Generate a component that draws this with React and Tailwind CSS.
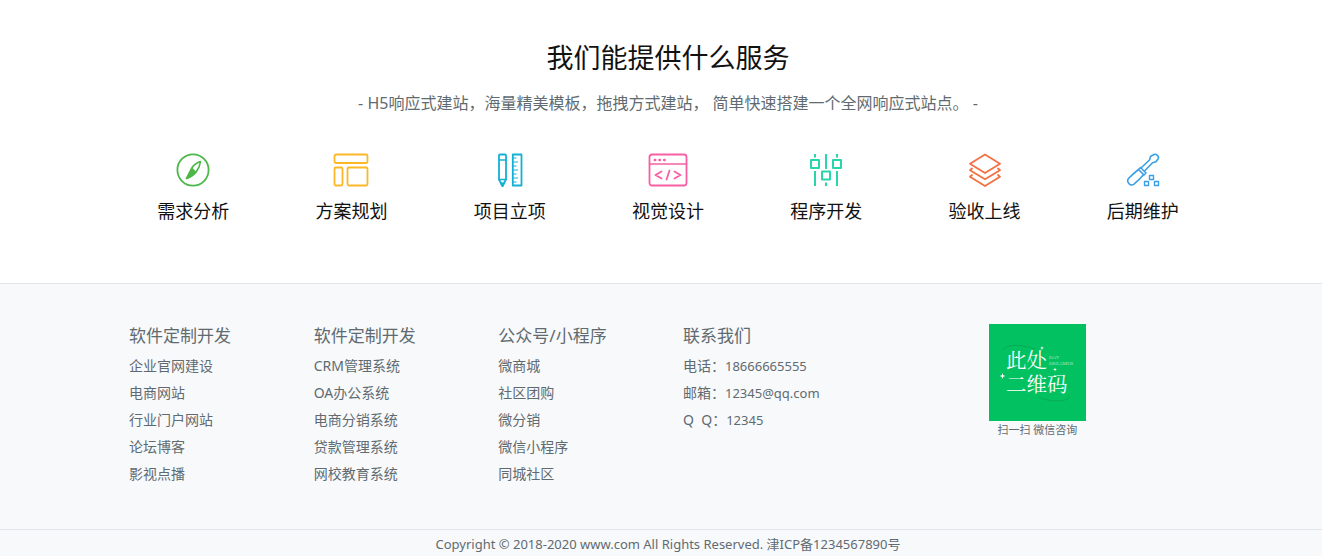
import React from "react";

const ICON_PROPS = {
  width: 40,
  height: 36,
  viewBox: "0 0 40 36",
  fill: "none",
  strokeWidth: 1.8,
  strokeLinejoin: "round",
  strokeLinecap: "round",
  "aria-hidden": true,
};

const CompassIcon = () => (
  <svg {...ICON_PROPS} stroke="#4cb848">
    <circle cx="20" cy="18" r="15.6" />
    <path d="M27.5 9.5c-3.2 1-6.6 3.4-8.2 5.8l-5.8 11.2c4.4-1.6 8.3-4.6 10-7 1.8-2.5 3.6-6.6 4-10z" strokeWidth="1.6" />
    <path d="M18.6 16l-5.4 10.7c3.8-1.2 7.3-3.7 9.8-6.4z" fill="#4cb848" strokeWidth="1" />
  </svg>
);

const LayoutIcon = () => (
  <svg {...ICON_PROPS} stroke="#fbb826">
    <rect x="3.5" y="2.5" width="33" height="8.5" rx="1.5" />
    <rect x="3.5" y="15.5" width="8" height="18" rx="1.5" />
    <rect x="16.5" y="15.5" width="20" height="18" rx="1.5" />
  </svg>
);

const PencilRulerIcon = () => (
  <svg {...ICON_PROPS} stroke="#14b1d4">
    <path d="M9 3.5q0-1 1-1h5q1 0 1 1v24l-3.5 6.5l-3.5-6.5z" />
    <path d="M9 8h7M9 27.5h7" strokeWidth="1.4" />
    <path d="M11.2 31.5l1.3 2.5l1.3-2.5z" fill="#14b1d4" />
    <rect x="22.8" y="2.5" width="8.7" height="31" />
    <path d="M23 6h3M23 10h4.5M23 14h3M23 18h4.5M23 22h3M23 26h4.5M23 30h3" strokeWidth="1.2" />
  </svg>
);

const CodeWindowIcon = () => (
  <svg {...ICON_PROPS} stroke="#f85fa3">
    <rect x="1.5" y="2.5" width="37" height="31" rx="2.5" />
    <path d="M1.5 12h37" strokeWidth="1.5" />
    <path d="M6.8 8h.4M11.5 8h.4M16.2 8h.4" strokeWidth="2.6" />
    <path d="M13.5 19.5l-6 3.5l6 3.5M26.5 19.5l6 3.5l-6 3.5M21.5 18.5l-3 9" />
  </svg>
);

const SlidersIcon = () => (
  <svg {...ICON_PROPS} stroke="#2bd5ab" strokeWidth="2" strokeLinecap="butt">
    <rect x="5" y="8" width="8" height="8" />
    <rect x="27" y="8" width="8" height="8" />
    <rect x="16" y="19.5" width="8" height="8" />
    <path d="M9 2v3.5M31 2v3.5M20 2v15M9 19v15M31 19v15M20 30.5v3.5" />
  </svg>
);

const LayersIcon = () => (
  <svg {...ICON_PROPS} stroke="#f37142">
    <path d="M20 2.5l15 9.2l-15 9.3l-15-9.3z" />
    <path d="M7 16.5l-2 1.7l15 9l15-9l-2-1.7M7 23l-2 1.7l15 9.3l15-9.3l-2-1.7" />
  </svg>
);

const ScrewdriverIcon = () => (
  <svg {...ICON_PROPS} stroke="#3a9fe6" strokeWidth="1.6">
    <path d="M18.5 15.5l8-7.5l1-3.5l4-2.2q1.5-.3 2.5.9q2.2 1.8 1.3 3.3l-2.3 3.3l-3.5 1l-7.5 7.7" />
    <path d="M15.5 17.5l2-2l5.5 5.5l-2 2z" />
    <path d="M15.5 17.5q-4.5 3.5-9.8 8.8c-2.9 3.2 1.5 8.6 5.3 5.8q5.5-4.6 9.5-9.3" />
    <path d="M26.5 23.5h4v4h-4zM21.5 29.5h4v4h-4zM31.5 29.5h4v4h-4z" strokeWidth="1.4" />
  </svg>
);

const SERVICES = [
  { name: "需求分析", Icon: CompassIcon },
  { name: "方案规划", Icon: LayoutIcon },
  { name: "项目立项", Icon: PencilRulerIcon },
  { name: "视觉设计", Icon: CodeWindowIcon },
  { name: "程序开发", Icon: SlidersIcon },
  { name: "验收上线", Icon: LayersIcon },
  { name: "后期维护", Icon: ScrewdriverIcon },
];

const LINK_GROUPS = [
  {
    title: "软件定制开发",
    links: ["企业官网建设", "电商网站", "行业门户网站", "论坛博客", "影视点播"],
  },
  {
    title: "软件定制开发",
    links: ["CRM管理系统", "OA办公系统", "电商分销系统", "贷款管理系统", "网校教育系统"],
  },
  {
    title: "公众号/小程序",
    links: ["微商城", "社区团购", "微分销", "微信小程序", "同城社区"],
  },
];

const CONTACTS = [
  { label: "电话：", value: "18666665555" },
  { label: "邮箱：", value: "12345@qq.com" },
  { label: "Q  Q：", value: "12345" },
];

const QrPlaceholder = () => (
  <svg className="size-[97px]" viewBox="0 0 97 97" role="img" aria-label="此处二维码">
    <rect width="97" height="97" fill="#02c160" />
    <path d="M14 26c3-7 22-5 32-1M50 73c8 5 30 6 30-1" fill="none" stroke="#06ad58" strokeWidth="1" />
    <text fill="#fff" fontFamily="'Noto Serif CJK SC', 'Noto Sans CJK SC', serif" fontSize="20.5">
      <tspan x="17" y="44">此处</tspan>
      <tspan x="17" y="68">二维码</tspan>
    </text>
    <text fill="#a5e8c3" fontFamily="'Liberation Serif', serif" fontSize="5">
      <tspan x="60" y="35">DAY</tspan>
      <tspan x="60" y="41">DREAMER</tspan>
    </text>
    <path
      d="M13.5 49l.7 2.3l2.3.7l-2.3.7l-.7 2.3l-.7-2.3l-2.3-.7l2.3-.7zM53 22l.5 1.5l1.5.5l-1.5.5l-.5 1.5l-.5-1.5l-1.5-.5l1.5-.5zM66 43.5l.5 1.5l1.5.5l-1.5.5l-.5 1.5l-.5-1.5l-1.5-.5l1.5-.5z"
      fill="#fff"
    />
  </svg>
);

const App = () => {
  return (
    <div className="font-['Noto_Sans','Noto_Sans_CJK_SC',sans-serif] text-[#5f6b70] bg-white">
      {/* Services */}
      <section className="pl-3.5 pt-9 pb-[54px] text-center">
        <h2 className="text-[27px] leading-11 text-[#111]">我们能提供什么服务</h2>
        <p className="mt-2 text-base leading-[30px]">
          - H5响应式建站，海量精美模板，拖拽方式建站， 简单快速搭建一个全网响应式站点。 -
        </p>
        <ul className="mx-auto mt-[34px] grid max-w-[1108px] grid-cols-7">
          {SERVICES.map(({ name, Icon }) => (
            <li key={name} className="flex flex-col items-center">
              <Icon />
              <h3 className="mt-[5px] text-lg leading-9 text-[#111]">{name}</h3>
            </li>
          ))}
        </ul>
      </section>

      {/* Footer */}
      <footer className="border-t border-[#e3e6e8] bg-[#f8f9fb]">
        <div className="pl-3.5 pt-10 pb-[42px]">
          <div className="mx-auto grid max-w-[1108px] grid-cols-6">
            {LINK_GROUPS.map((group, i) => (
              <div key={i} className="px-[15px]">
                <h4 className="mb-1 text-[17px] leading-6">{group.title}</h4>
                <ul className="text-sm leading-[27px]">
                  {group.links.map((link) => (
                    <li key={link}>
                      <a href="#" className="hover:text-[#111]">{link}</a>
                    </li>
                  ))}
                </ul>
              </div>
            ))}

            <div className="px-[15px]">
              <h4 className="mb-1 text-[17px] leading-6">联系我们</h4>
              <ul className="text-sm leading-[27px]">
                {CONTACTS.map((item) => (
                  <li key={item.label} className="whitespace-pre">
                    {item.label}
                    <span className="text-[13px] leading-none">{item.value}</span>
                  </li>
                ))}
              </ul>
            </div>

            <div className="col-span-2 flex flex-col items-center">
              <QrPlaceholder />
              <p className="text-[11px] leading-[18px]">扫一扫 微信咨询</p>
            </div>
          </div>
        </div>

        <div className="border-t border-[#e3e6e8] pl-3.5 pt-0.5 text-center text-[13px] leading-6">
          Copyright © 2018-2020 www.com All Rights Reserved. 津ICP备1234567890号
        </div>
      </footer>
    </div>
  );
};

export default App;
